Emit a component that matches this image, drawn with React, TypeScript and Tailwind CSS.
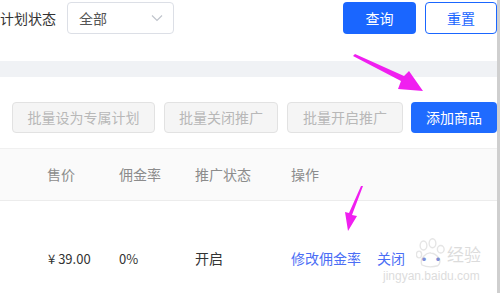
import React from "react";

const font = { fontFamily: '"Noto Sans CJK SC", "Noto Sans", sans-serif' };

export default function App() {
  return (
    <div className="relative w-[500px] h-[293px] overflow-hidden bg-white flex" style={font}>
      <div className="w-[497px] flex flex-col">
        {/* filter row */}
        <div className="h-[61px] flex items-start pt-[2px]">
          <div className="h-[32px] flex items-center text-[14px] text-[#333] w-[67px]">计划状态</div>
          <div className="w-[107px] h-[32px] border border-[#dcdfe6] rounded-[4px] flex items-center justify-between pl-[11px] pr-[10px] text-[14px] text-[#555]">
            <span>全部</span>
            <svg width="12" height="8" viewBox="0 0 12 8" fill="none">
              <path d="M1 1.5 L6 6.5 L11 1.5" stroke="#c0c4cc" strokeWidth="1.2" />
            </svg>
          </div>
          <div className="flex-1" />
          <div className="w-[73px] h-[32px] rounded-[4px] bg-[#1a66ff] text-white text-[14px] flex items-center justify-center">查询</div>
          <div className="w-[72px] h-[32px] ml-[9px] rounded-[4px] border border-[#1a66ff] text-[#1a66ff] text-[14px] flex items-center justify-center">重置</div>
        </div>
        {/* gray band */}
        <div className="h-[16px] bg-[#f0f2f5]" />
        {/* batch buttons */}
        <div className="h-[72px] flex items-start pt-[25px] pl-[12px] border-b border-[#f0f0f0]">
          <div className="w-[143px] h-[31px] rounded-[4px] border border-[#e2e2e2] bg-[#f5f5f5] text-[#b8b8b8] text-[14px] flex items-center justify-center">批量设为专属计划</div>
          <div className="w-[114px] h-[31px] ml-[9px] rounded-[4px] border border-[#e2e2e2] bg-[#f5f5f5] text-[#b8b8b8] text-[14px] flex items-center justify-center">批量关闭推广</div>
          <div className="w-[116px] h-[31px] ml-[9px] rounded-[4px] border border-[#e2e2e2] bg-[#f5f5f5] text-[#b8b8b8] text-[14px] flex items-center justify-center">批量开启推广</div>
          <div className="w-[86px] h-[31px] ml-[8px] rounded-[4px] bg-[#1f6bff] text-white text-[14px] flex items-center justify-center">添加商品</div>
        </div>
        {/* table header */}
        <div className="h-[52px] bg-[#fafafa] border-b border-[#ececec] flex items-center pl-[47px] text-[14px] text-[#8c8c8c]">
          <div className="w-[72px]">售价</div>
          <div className="w-[76px]">佣金率</div>
          <div className="w-[96px]">推广状态</div>
          <div>操作</div>
        </div>
        {/* data row */}
        <div className="flex items-center pl-[48px] pt-[47px] text-[13px] text-[#333]">
          <div className="w-[71px]">¥ 39.00</div>
          <div className="w-[76px]">0%</div>
          <div className="w-[96px] text-[14px]">开启</div>
          <div className="text-[14px] text-[#4b6ef5] flex items-center">
            <span>修改佣金率</span>
            <span className="ml-[16px]">关闭</span>
            <span className="ml-[12px] text-[#7d8fd8] font-bold">··</span>
          </div>
        </div>
      </div>
      <div className="w-[3px] h-full bg-[#cfcfcf]" />

      {/* watermark */}
      <div className="absolute left-[416px] top-[238px] opacity-25 pointer-events-none">
        <svg width="30" height="30" viewBox="0 0 40 40" fill="none" stroke="#999" strokeWidth="1.8">
          <ellipse cx="10" cy="10" rx="4.5" ry="6" />
          <ellipse cx="22" cy="7" rx="4.5" ry="6" />
          <ellipse cx="33" cy="15" rx="4.5" ry="5" />
          <ellipse cx="4" cy="22" rx="3.5" ry="4.5" />
          <path d="M8 36 C4 27 14 19 20 20 C28 21 36 31 29 37 C22 39 14 39 8 36 Z" />
        </svg>
      </div>
      <div className="absolute left-[447px] top-[245px] text-[17px] leading-none text-[#aaa] opacity-40 pointer-events-none">经验</div>
      <div className="absolute left-[383px] top-[270px] text-[12px] leading-none text-[#aaa] opacity-40 pointer-events-none" style={{ fontFamily: '"Liberation Sans", sans-serif' }}>jingyan.baidu.com</div>

      {/* arrows */}
      <svg className="absolute left-0 top-0 pointer-events-none" width="500" height="293" viewBox="0 0 500 293">
        <polygon points="355,54 404,76 409,71 423,91 398,89 401,81 353,56" fill="#f01ff0" />
        <polygon points="363,186 352,215 357,216 348,231 345,212 349,213 361,186" fill="#f01ff0" />
      </svg>
    </div>
  );
}
